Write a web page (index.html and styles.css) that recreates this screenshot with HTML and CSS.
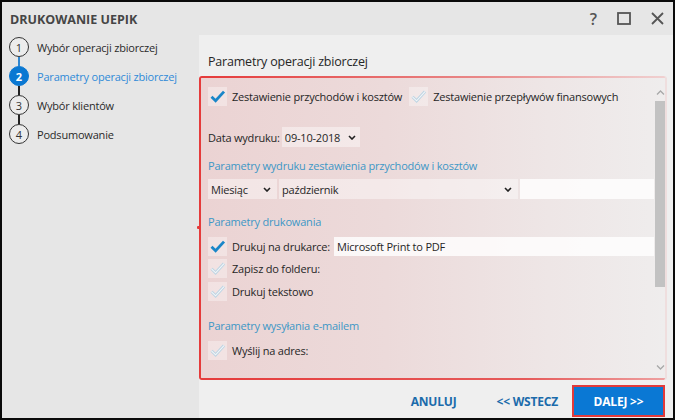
FILE: index.html
```html
<!DOCTYPE html>
<html lang="pl">
<head>
<meta charset="utf-8">
<title>Drukowanie UEPIK</title>
<link rel="stylesheet" href="styles.css">
</head>
<body>
<div class="window">
  <header class="titlebar">
    <div class="title">DRUKOWANIE UEPIK</div>
    <div class="winbtns">
      <span class="help">?</span>
      <svg class="wicon" width="14" height="13" viewBox="0 0 14 13"><rect x="1" y="1" width="12" height="11" fill="none" stroke="#555" stroke-width="1.8"/></svg>
      <svg class="wicon" width="13" height="13" viewBox="0 0 13 13"><path d="M1 1 L12 12 M12 1 L1 12" stroke="#555" stroke-width="1.8"/></svg>
    </div>
  </header>
  <div class="body">
    <aside class="steps">
      <div class="step"><span class="num">1</span><span class="lbl">Wybór operacji zbiorczej</span></div>
      <div class="conn blue"></div>
      <div class="step active"><span class="num">2</span><span class="lbl">Parametry operacji zbiorczej</span></div>
      <div class="conn"></div>
      <div class="step"><span class="num">3</span><span class="lbl">Wybór klientów</span></div>
      <div class="conn"></div>
      <div class="step"><span class="num">4</span><span class="lbl">Podsumowanie</span></div>
    </aside>
    <main class="main">
      <h1 class="heading">Parametry operacji zbiorczej</h1>
      <section class="box">
        <div class="content">
          <div class="row r1">
            <span class="cb"><svg width="19" height="19" viewBox="0 0 19 19"><path d="M3.5 9.8 L7.6 13.8 L16 4.6" fill="none" stroke="#1a86c8" stroke-width="2.8"/></svg></span>
            <span class="lbl">Zestawienie przychodów i kosztów</span>
            <span class="cb cb2"><svg width="19" height="19" viewBox="0 0 19 19"><path d="M3.5 9.8 L7.6 13.8 L16 4.6" fill="none" stroke="#bdd4e3" stroke-width="3"/><path d="M3.5 9.8 L7.6 13.8 L16 4.6" fill="none" stroke="#f3f6f8" stroke-width="1.1"/></svg></span>
            <span class="lbl">Zestawienie przepływów finansowych</span>
          </div>
          <div class="row r-date">
            <span class="lbl">Data wydruku:</span>
            <span class="select sel-date">09-10-2018<svg class="chev" width="8" height="5" viewBox="0 0 8 5"><path d="M1 1 L4 4 L7 1" fill="none" stroke="#222" stroke-width="1.6"/></svg></span>
          </div>
          <div class="sec s1">Parametry wydruku zestawienia przychodów i kosztów</div>
          <div class="row r-month">
            <span class="select sel-m">Miesiąc<svg class="chev" width="8" height="5" viewBox="0 0 8 5"><path d="M1 1 L4 4 L7 1" fill="none" stroke="#222" stroke-width="1.6"/></svg></span>
            <span class="select sel-p">październik<svg class="chev" width="8" height="5" viewBox="0 0 8 5"><path d="M1 1 L4 4 L7 1" fill="none" stroke="#222" stroke-width="1.6"/></svg></span>
            <span class="input in-month"></span>
          </div>
          <div class="sec s2">Parametry drukowania</div>
          <div class="row r-print">
            <span class="cb"><svg width="19" height="19" viewBox="0 0 19 19"><path d="M3.5 9.8 L7.6 13.8 L16 4.6" fill="none" stroke="#1a86c8" stroke-width="2.8"/></svg></span>
            <span class="lbl">Drukuj na drukarce:</span>
            <span class="input in-printer">Microsoft Print to PDF</span>
          </div>
          <div class="row r-folder">
            <span class="cb"><svg width="19" height="19" viewBox="0 0 19 19"><path d="M3.5 9.8 L7.6 13.8 L16 4.6" fill="none" stroke="#bdd4e3" stroke-width="3"/><path d="M3.5 9.8 L7.6 13.8 L16 4.6" fill="none" stroke="#f3f6f8" stroke-width="1.1"/></svg></span>
            <span class="lbl">Zapisz do folderu:</span>
          </div>
          <div class="row r-text">
            <span class="cb"><svg width="19" height="19" viewBox="0 0 19 19"><path d="M3.5 9.8 L7.6 13.8 L16 4.6" fill="none" stroke="#bdd4e3" stroke-width="3"/><path d="M3.5 9.8 L7.6 13.8 L16 4.6" fill="none" stroke="#f3f6f8" stroke-width="1.1"/></svg></span>
            <span class="lbl">Drukuj tekstowo</span>
          </div>
          <div class="sec s3">Parametry wysyłania e-mailem</div>
          <div class="row r-mail">
            <span class="cb"><svg width="19" height="19" viewBox="0 0 19 19"><path d="M3.5 9.8 L7.6 13.8 L16 4.6" fill="none" stroke="#bdd4e3" stroke-width="3"/><path d="M3.5 9.8 L7.6 13.8 L16 4.6" fill="none" stroke="#f3f6f8" stroke-width="1.1"/></svg></span>
            <span class="lbl">Wyślij na adres:</span>
          </div>
        </div>
        <div class="scrollbar">
          <svg class="sarrow" width="9" height="5" viewBox="0 0 9 5"><path d="M1 4.5 L4.5 1 L8 4.5" fill="none" stroke="#a8a8a8" stroke-width="1.3"/></svg>
          <div class="thumb"></div>
          <div class="spacer"></div>
          <svg class="sarrow" width="9" height="5" viewBox="0 0 9 5"><path d="M1 0.5 L4.5 4 L8 0.5" fill="none" stroke="#a8a8a8" stroke-width="1.3"/></svg>
        </div>
        <span class="tick"></span>
      </section>
      <footer class="footer">
        <span class="btn-link">ANULUJ</span>
        <span class="btn-link back">&lt;&lt; WSTECZ</span>
        <span class="btn-next">DALEJ &gt;&gt;</span>
      </footer>
    </main>
  </div>
</div>
</body>
</html>
```

FILE: styles.css
```css
* { box-sizing: border-box; }
body { margin: 0; background: #000; font-family: "Open Sans", "Noto Sans", sans-serif; }
.window {
  width: 675px; height: 420px;
  border: 2px solid #0a0a0a;
  background: #e6e6e6;
  display: flex; flex-direction: column;
  overflow: hidden;
}
.titlebar {
  height: 33px; flex: none;
  display: flex; align-items: center; justify-content: space-between;
  padding: 0 9px 0 8px;
}
.title { font-weight: 700; font-size: 12.5px; color: #454545; padding-top: 1px; }
.winbtns { display: flex; align-items: center; }
.help { font-size: 16px; font-weight: 600; color: #555; line-height: 16px; margin-right: 20px; }
.wicon { display: block; }
.wicon + .wicon { margin-left: 20px; }

.body { flex: 1; display: flex; min-height: 0; }
.steps { width: 197px; flex: none; padding: 2px 0 0 7px; }
.step { height: 20px; display: flex; align-items: center; gap: 8px; font-size: 11px; color: #2a2a2a; letter-spacing: -0.2px; }
.num {
  width: 20px; height: 20px; flex: none; border-radius: 50%;
  border: 1.5px solid #333; background: #ececec;
  display: flex; align-items: center; justify-content: center;
  font-size: 11px; color: #333; letter-spacing: 0;
}
.conn { width: 1.5px; height: 9px; background: #222; margin-left: 9.3px; }
.conn.blue { background: #2f86d0; }
.step.active .num { background: #0a78d2; border-color: #0a78d2; color: #fff; font-weight: 700; }
.step.active .lbl { color: #2f8ad8; }

.main { flex: 1; min-width: 0; background: #efefef; display: flex; flex-direction: column; }
.heading {
  margin: 0 0 4px; padding: 17px 0 0 9px;
  font-size: 12.5px; line-height: 20px; font-weight: 400; color: #262626;
  letter-spacing: -0.2px;
}
.box {
  position: relative;
  height: 304px; margin-right: 6px; flex: none;
  border-left: 2px solid #e53b3b;
  border-right: 2px solid #efdede;
  border-radius: 3px;
  background:
    linear-gradient(to right, #e53b3b, #e98888 60%, #f0d0d0) top / 100% 2px no-repeat,
    linear-gradient(to right, #e53b3b, #e65a5a 70%, #eea0a0) bottom / 100% 2px no-repeat,
    linear-gradient(to right, #ebd3d3 0%, #ecdada 40%, #eee6e6 75%, #efeded 100%);
  display: grid; grid-template-columns: minmax(0, 1fr) 10px; column-gap: 1px;
  padding-left: 7px;
}
.tick { position: absolute; left: -4px; top: 150px; width: 3px; height: 3px; background: #e53b3b; border-radius: 1px; }
.content { min-width: 0; padding-top: 11px; font-size: 11px; color: #262626; letter-spacing: -0.2px; }
.row { display: flex; align-items: center; height: 19px; }
.cb { width: 19px; height: 19px; flex: none; background: rgba(255,255,255,0.35); margin-right: 5px; }
.cb svg { display: block; }
.cb2 { margin-left: 7px; }
.lbl { white-space: nowrap; }
.r-date { height: 20px; margin-top: 21px; }
.select {
  height: 20px; background: rgba(255,255,255,0.42);
  display: flex; align-items: center; justify-content: space-between;
  padding: 0 6px 0 3px; white-space: nowrap;
}
.chev { display: block; margin-left: 8px; flex: none; }
.sel-date { margin-left: 2px; width: 78px; }
.sec { font-size: 11px; line-height: 16px; color: #3d97c6; }
.s1 { margin-top: 11px; }
.r-month { height: 20px; margin-top: 5px; }
.sel-m { width: 69px; }
.sel-p { width: 239px; margin-left: 2px; }
.input { height: 100%; background: rgba(255,255,255,0.8); display: flex; align-items: center; padding-left: 3px; }
.in-month { flex: 1; margin-left: 2px; }
.s2 { margin-top: 15px; }
.r-print { margin-top: 7px; }
.in-printer { flex: 1; margin-left: 4px; }
.r-folder { margin-top: 3px; }
.r-text { margin-top: 4px; }
.s3 { margin-top: 17px; }
.r-mail { margin-top: 7px; }

.scrollbar { display: flex; flex-direction: column; align-items: center; padding: 14px 0 10px; }
.sarrow { display: block; flex: none; }
.thumb { width: 10px; height: 186px; background: #c2c2c2; margin-top: 6px; flex: none; }
.spacer { flex: 1; }

.footer { flex: 1; display: flex; justify-content: flex-end; align-items: flex-start; padding: 5px 8px 0 0; }
.btn-link { height: 32px; display: flex; align-items: center; font-size: 12px; font-weight: 700; color: #1b6bab; letter-spacing: -0.2px; }
.back { margin-left: 40px; }
.btn-next {
  width: 93px; height: 32px; margin-left: 14px;
  border: 2px solid #e23a3a; background: #0a78d4;
  display: flex; align-items: center; justify-content: center;
  font-size: 12px; font-weight: 700; color: #fff; letter-spacing: -0.2px;
}
```
